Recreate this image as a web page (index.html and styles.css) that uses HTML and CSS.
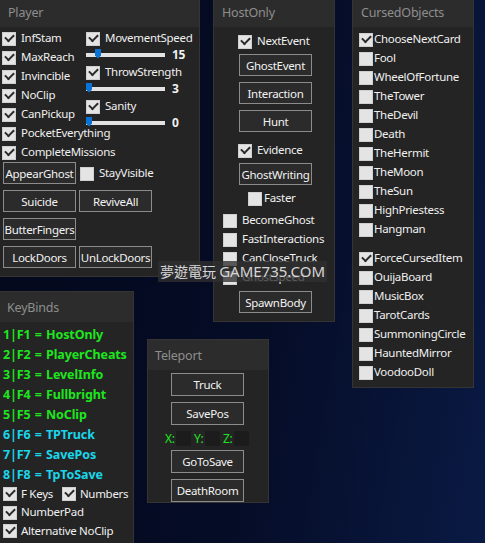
FILE: index.html
```html
<!DOCTYPE html>
<html>
<head>
<meta charset="utf-8">
<link rel="stylesheet" href="styles.css">
</head>
<body>
<div class="desk">

  <div class="win player">
    <div class="head">Player</div>
    <div class="pcols">
      <div class="lcol">
        <div class="chk on">InfStam</div>
        <div class="chk on">MaxReach</div>
        <div class="chk on">Invincible</div>
        <div class="chk on">NoClip</div>
        <div class="chk on">CanPickup</div>
        <div class="chk on">PocketEverything</div>
        <div class="chk on">CompleteMissions</div>
      </div>
      <div class="rcol">
        <div class="chk on srow">MovementSpeed</div>
        <div class="slider srow"><div class="track"><span class="thumb" style="left:9px"></span></div><b class="val">15</b></div>
        <div class="chk on srow">ThrowStrength</div>
        <div class="slider srow"><div class="track"><span class="thumb" style="left:0px"></span></div><b class="val">3</b></div>
        <div class="chk on srow">Sanity</div>
        <div class="slider srow"><div class="track"><span class="thumb" style="left:0px"></span></div><b class="val">0</b></div>
      </div>
    </div>
    <div class="pbtns">
      <div class="brow"><div class="btn">AppearGhost</div><div class="chk">StayVisible</div></div>
      <div class="brow"><div class="btn">Suicide</div><div class="btn">ReviveAll</div></div>
      <div class="brow"><div class="btn">ButterFingers</div></div>
      <div class="brow"><div class="btn">LockDoors</div><div class="btn">UnLockDoors</div></div>
    </div>
  </div>

  <div class="win host">
    <div class="head">HostOnly</div>
    <div class="hbody">
      <div class="chk on h-next">NextEvent</div>
      <div class="btn h-b1">GhostEvent</div>
      <div class="btn h-b2">Interaction</div>
      <div class="btn h-b2">Hunt</div>
      <div class="chk on h-evi">Evidence</div>
      <div class="btn h-b1">GhostWriting</div>
      <div class="chk h-fast">Faster</div>
      <div class="chk h-row h-first">BecomeGhost</div>
      <div class="chk h-row">FastInteractions</div>
      <div class="chk h-row">CanCloseTruck</div>
      <div class="chk h-row">GhostSpeed</div>
      <div class="btn h-spawn">SpawnBody</div>
    </div>
  </div>

  <div class="win cursed">
    <div class="head">CursedObjects</div>
    <div class="cbody">
      <div class="chk on c-row">ChooseNextCard</div>
      <div class="chk c-row">Fool</div>
      <div class="chk c-row">WheelOfFortune</div>
      <div class="chk c-row">TheTower</div>
      <div class="chk c-row">TheDevil</div>
      <div class="chk c-row">Death</div>
      <div class="chk c-row">TheHermit</div>
      <div class="chk c-row">TheMoon</div>
      <div class="chk c-row">TheSun</div>
      <div class="chk c-row">HighPriestess</div>
      <div class="chk c-row">Hangman</div>
      <div class="chk on c-row c-gap">ForceCursedItem</div>
      <div class="chk c-row">OuijaBoard</div>
      <div class="chk c-row">MusicBox</div>
      <div class="chk c-row">TarotCards</div>
      <div class="chk c-row">SummoningCircle</div>
      <div class="chk c-row">HauntedMirror</div>
      <div class="chk c-row">VoodooDoll</div>
    </div>
  </div>

  <div class="win keys">
    <div class="head tall">KeyBinds</div>
    <div class="kbody">
      <div class="kb g">1|F1 = HostOnly</div>
      <div class="kb g">2|F2 = PlayerCheats</div>
      <div class="kb g">3|F3 = LevelInfo</div>
      <div class="kb g">4|F4 = Fullbright</div>
      <div class="kb g">5|F5 = NoClip</div>
      <div class="kb c">6|F6 = TPTruck</div>
      <div class="kb c">7|F7 = SavePos</div>
      <div class="kb c">8|F8 = TpToSave</div>
      <div class="krow krow-first"><div class="chk on">F Keys</div><div class="chk on">Numbers</div></div>
      <div class="krow"><div class="chk on">NumberPad</div></div>
      <div class="krow"><div class="chk on">Alternative NoClip</div></div>
    </div>
  </div>

  <div class="win tele">
    <div class="head tall">Teleport</div>
    <div class="tbody">
      <div class="btn tb">Truck</div>
      <div class="btn tb">SavePos</div>
      <div class="xyz">
        <span class="lbl">X:</span><span class="fld"></span>
        <span class="lbl">Y:</span><span class="fld"></span>
        <span class="lbl">Z:</span><span class="fld"></span>
      </div>
      <div class="btn tb">GoToSave</div>
      <div class="btn tb tb-last">DeathRoom</div>
    </div>
  </div>

  <div class="mark">夢遊電玩 <span class="mark-en">GAME735.COM</span></div>
</div>
</body>
</html>
```

FILE: styles.css
```css
* { box-sizing: border-box; }
html, body { margin: 0; padding: 0; }
body {
  width: 485px;
  height: 543px;
  overflow: hidden;
  font-family: "Noto Sans", "Noto Sans CJK TC", sans-serif;
  font-size: 11.5px;
  letter-spacing: -0.3px;
  color: #f0f0f0;
  background: linear-gradient(100deg, #03081a 0%, #050c26 55%, #0a1a44 100%);
}
.desk { position: relative; width: 485px; height: 543px; }

.win {
  position: absolute;
  background: #242424;
  border: 1px solid #343434;
  border-top: none;
}
.head {
  height: 27px;
  background: #2c2c2c;
  color: #8e8e8e;
  font-size: 12.5px;
  letter-spacing: -0.2px;
  padding-left: 8px;
  line-height: 25px;
}
.head.tall { height: 30px; line-height: 31px; padding-left: 7px; }

/* checkbox */
.chk {
  position: relative;
  padding-left: 19px;
  white-space: nowrap;
  display: flex;
  align-items: center;
  line-height: 1;
}
.chk::before {
  content: "";
  position: absolute;
  left: 0;
  top: 50%;
  width: 12px;
  height: 12px;
  margin-top: -6px;
  background: #e4e4e4;
  border: 1px solid #cfcfcf;
}
.chk.on::after {
  content: "";
  position: absolute;
  left: 3px;
  top: 50%;
  width: 7px;
  height: 4px;
  margin-top: -4px;
  border-left: 2px solid #2a2a2a;
  border-bottom: 2px solid #2a2a2a;
  transform: rotate(-45deg);
}

/* button */
.btn {
  width: 73px;
  height: 22px;
  border: 1px solid #8c8c8c;
  background: #2b2b2b;
  color: #f2f2f2;
  display: flex;
  align-items: center;
  justify-content: center;
  white-space: nowrap;
}

/* Player */
.player { left: 0; top: 0; width: 200px; height: 277px; border-left: none; }
.pcols { display: flex; padding-left: 2px; height: 134px; }
.lcol { width: 84px; padding-top: 1px; }
.lcol .chk { height: 19px; }
.rcol { padding-top: 2px; }
.srow { height: 17px; }
.slider { display: flex; align-items: center; }
.track {
  position: relative;
  width: 79px;
  height: 4px;
  background: #e2e2e2;
}
.thumb {
  position: absolute;
  top: -4px;
  width: 6px;
  height: 10px;
  background: #0a73d6;
  clip-path: polygon(0 0, 100% 0, 100% 70%, 50% 100%, 0 70%);
}
.val { margin-left: 7px; font-weight: bold; font-size: 12px; }
.pbtns { display: flex; flex-direction: column; gap: 6px; padding-left: 3px; margin-top: 1px; }
.brow { display: flex; gap: 3px; align-items: center; }
.brow .chk { margin-left: 1px; }

/* HostOnly */
.host { left: 213px; top: 0; width: 122px; height: 322px; }
.hbody { display: flex; flex-direction: column; align-items: flex-start; }
.h-next { height: 18px; margin-top: 5px; margin-left: 24px; }
.h-b1 { margin-top: 4px; margin-left: 25px; }
.h-b2 { margin-top: 6px; margin-left: 25px; }
.h-evi { height: 18px; margin-top: 9px; margin-left: 24px; }
.h-fast { height: 18px; margin-top: 4px; margin-left: 34px; padding-left: 16px; }
.h-row { height: 19px; margin-left: 9px; }
.h-first { margin-top: 3px; }
.h-spawn { margin-top: 5px; margin-left: 25px; }

/* CursedObjects */
.cursed { left: 352px; top: 0; width: 122px; height: 388px; }
.cbody { padding-left: 6px; padding-top: 2px; }
.c-row { height: 19px; padding-left: 15px; }
.c-gap { margin-top: 10px; }

/* KeyBinds */
.keys { left: 0; top: 291px; width: 134px; height: 270px; border-left: none; border-top: 1px solid #343434; }
.kbody { padding-left: 3px; padding-top: 3px; }
.kb { height: 20px; line-height: 20px; font-weight: bold; font-size: 12.5px; letter-spacing: -0.1px; word-spacing: 1px; white-space: nowrap; }
.kb.g { color: #1ee61e; }
.kb.c { color: #1ad6ea; }
.krow { display: flex; height: 18.5px; gap: 9px; }
.krow-first { margin-top: -1px; }
.krow .chk { height: 18.5px; padding-left: 18px; }

/* Teleport */
.tele { left: 147px; top: 339px; width: 122px; height: 164px; border-top: 1px solid #343434; }
.tbody { display: flex; flex-direction: column; padding-left: 23px; padding-top: 3px; }
.tb { height: 23px; margin-bottom: 6px; }
.xyz { display: flex; align-items: center; height: 18px; margin-left: -6px; margin-top: -2px; margin-bottom: 3px; }
.lbl { color: #1ee61e; font-size: 12px; width: 11px; }
.fld { width: 15px; height: 15px; background: #1c1c1c; margin-right: 3px; }

/* watermark */
.mark {
  position: absolute;
  left: 158px;
  top: 261px;
  width: 169px;
  height: 21px;
  background: rgba(48, 48, 48, 0.78);
  color: #d6d6d6;
  font-size: 14px;
  letter-spacing: 0;
  line-height: 21px;
  padding-left: 2px;
  white-space: nowrap;
  font-family: "Noto Sans CJK TC", sans-serif;
}
.mark-en { font-family: "Noto Sans", sans-serif; font-size: 15px; }
```
